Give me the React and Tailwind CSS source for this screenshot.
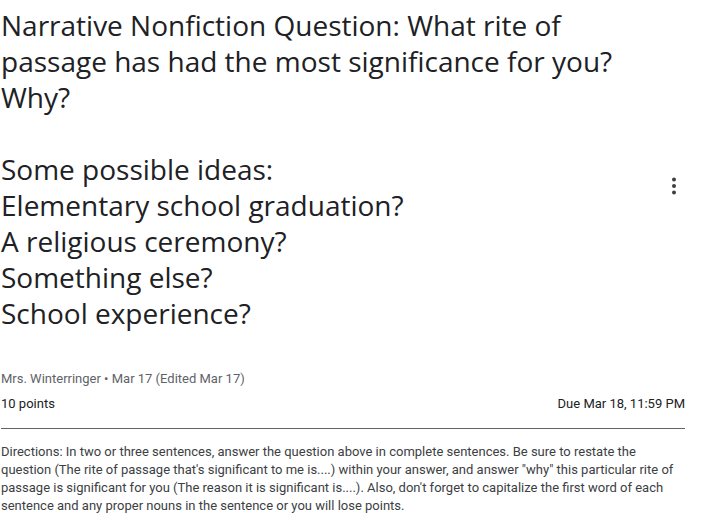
import React from 'react';

const heading = [
  'Narrative Nonfiction Question: What rite of',
  'passage has had the most significance for you?',
  'Why?',
  '',
  'Some possible ideas:',
  'Elementary school graduation?',
  'A religious ceremony?',
  'Something else?',
  'School experience?',
];

function MoreIcon() {
  return (
    <svg width="24" height="24" viewBox="0 0 24 24" fill="#3c4043">
      <circle cx="12" cy="5.5" r="2" />
      <circle cx="12" cy="12" r="2" />
      <circle cx="12" cy="18.5" r="2" />
    </svg>
  );
}

export default function App() {
  return (
    <div className="w-[704px] h-[521px] overflow-hidden bg-white pl-[1px] pr-[19px] font-['Roboto',sans-serif]">
      <div className="flex pt-[7px]">
        <h1 className="flex-1 font-['Open_Sans',sans-serif] text-[28px] leading-[36px] text-[#202124] font-normal">
          {heading.map((line, i) => (
            <div key={i} className="whitespace-nowrap h-[36px]">{line}</div>
          ))}
        </h1>
        <div className="mt-[167px] mr-[-1px]">
          <MoreIcon />
        </div>
      </div>

      <div className="mt-[38px] text-[13px] leading-[20px] text-[#5f6368]">
        Mrs. Winterringer • Mar 17 (Edited Mar 17)
      </div>
      <div className="mt-[5px] flex justify-between text-[13px] leading-[20px] font-normal text-[#202124]">
        <span>10 points</span>
        <span>Due Mar 18, 11:59 PM</span>
      </div>
      <div className="mt-[14px] border-t border-[#5f6368]"></div>

      <p className="mt-[14px] text-[13px] leading-[18px] text-[#3c4043]">
        Directions: In two or three sentences, answer the question above in complete sentences. Be sure to restate the question (The rite of passage that's significant to me is....) within your answer, and answer "why" this particular rite of passage is significant for you (The reason it is significant is....). Also, don't forget to capitalize the first word of each sentence and any proper nouns in the sentence or you will lose points.
      </p>
    </div>
  );
}
